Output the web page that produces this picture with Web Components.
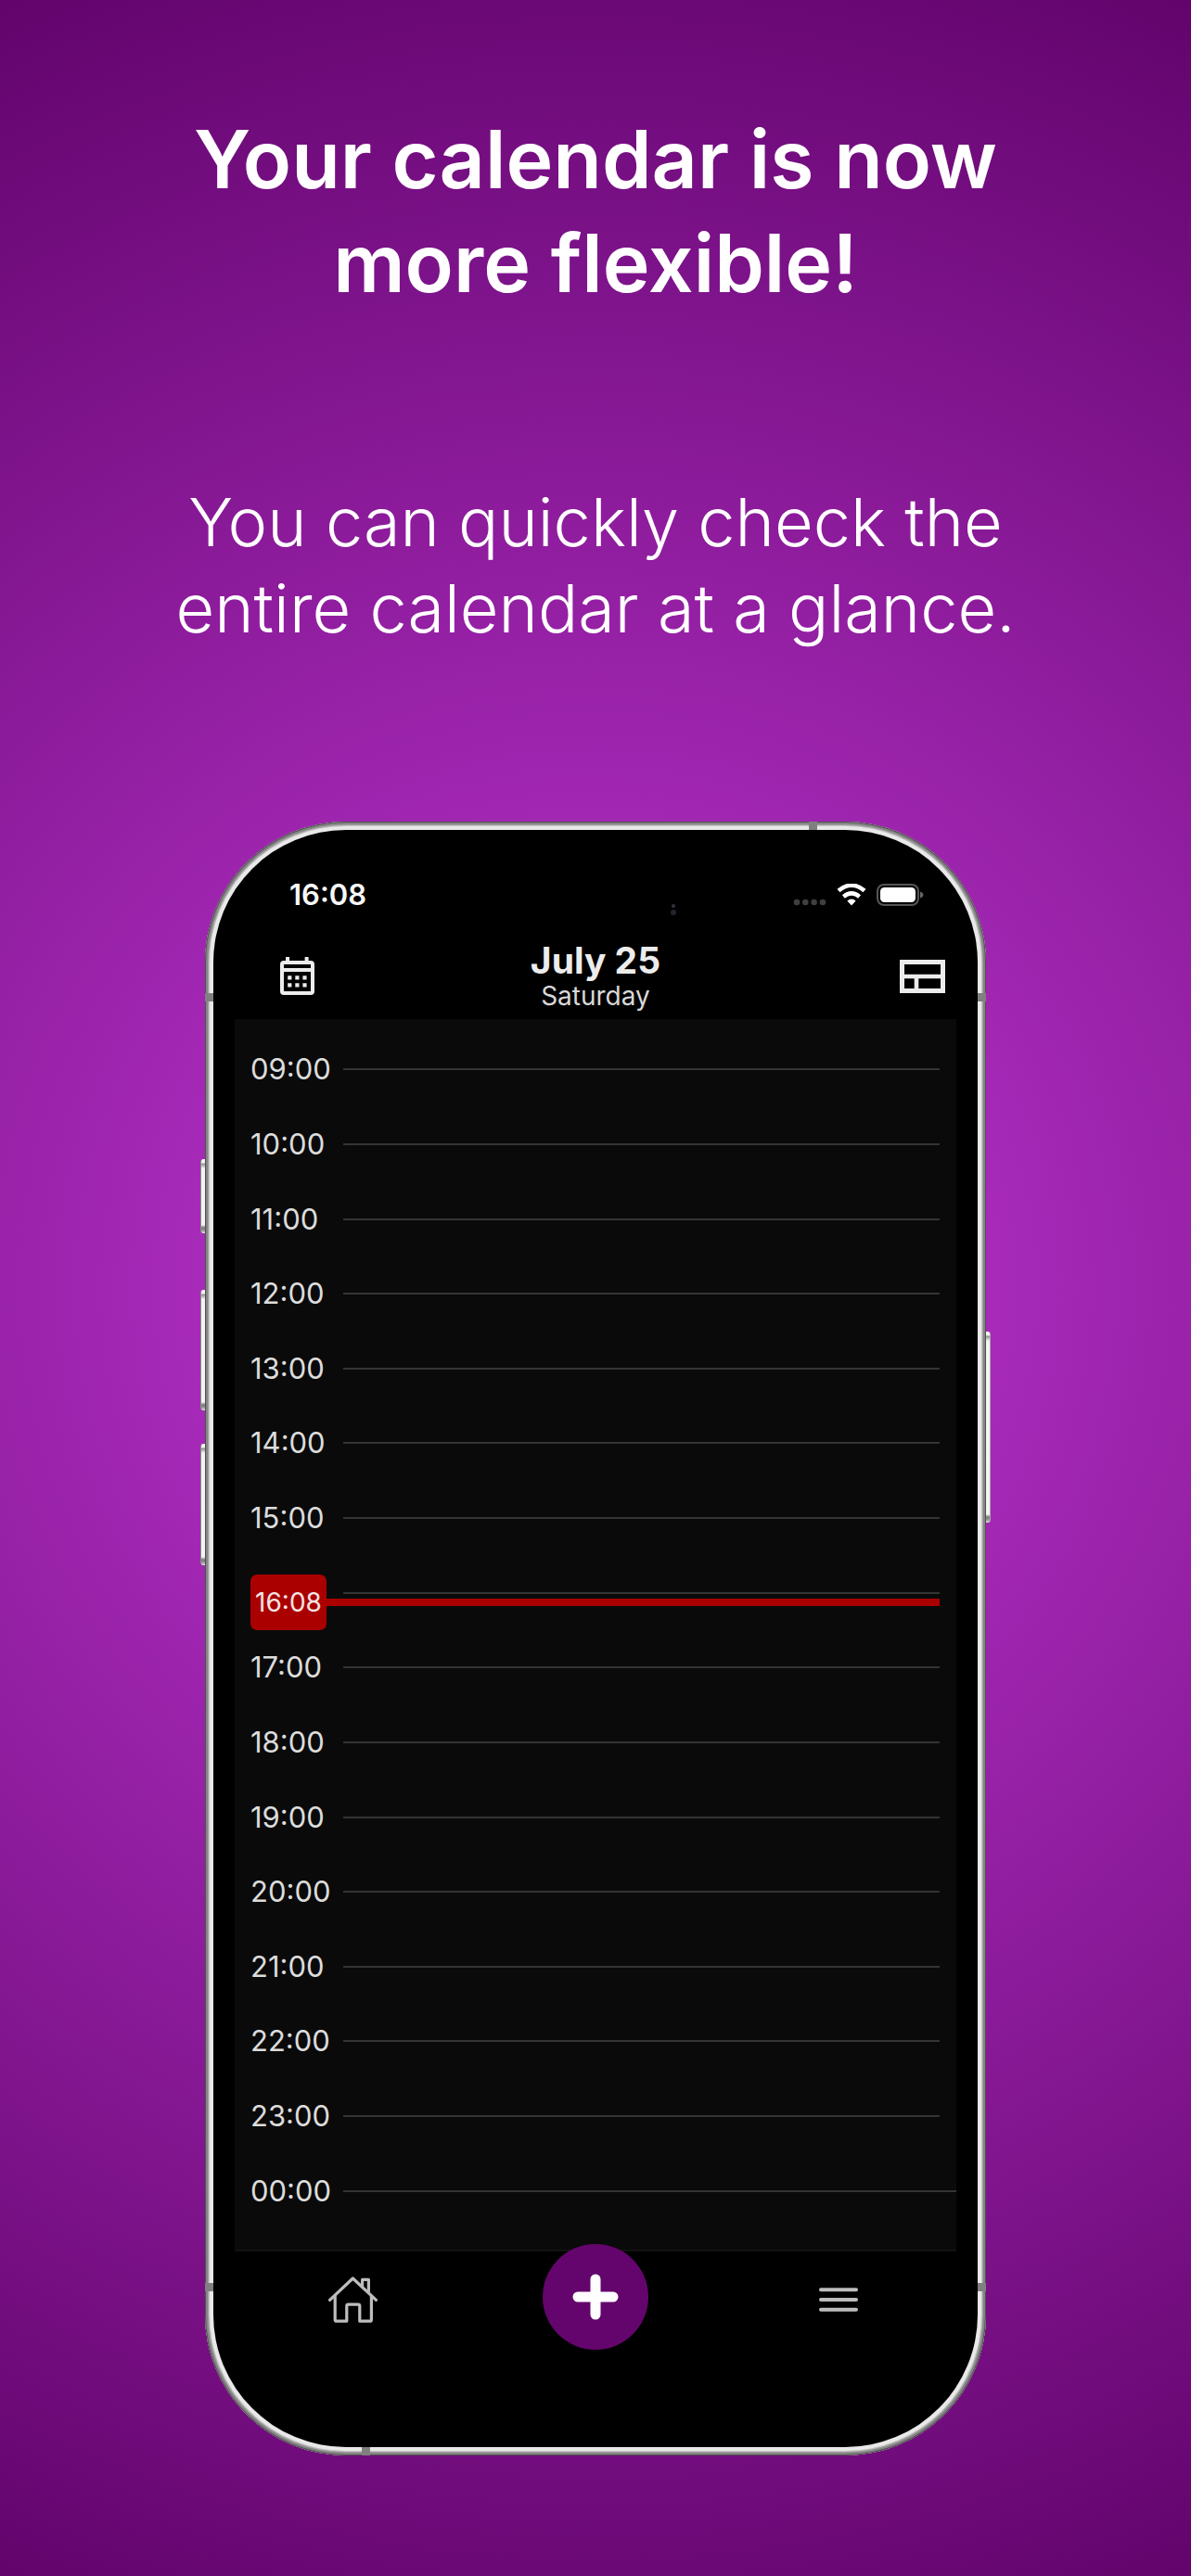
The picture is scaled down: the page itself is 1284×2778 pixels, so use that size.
<!DOCTYPE html>
<html lang="en">
<head>
<meta charset="utf-8">
<meta name="viewport" content="width=device-width, initial-scale=1">
<title>Your calendar is now more flexible!</title>
<style>
  html { min-height: 100%; }
  body {
    margin: 0;
    min-height: 100vh;
    background: radial-gradient(circle farthest-corner at 50% 50%, #c239d7 0%, #62046c 100%) no-repeat;
    font-family: Inter, "Liberation Sans", sans-serif;
    color: #fff;
  }
</style>
</head>
<body>
<promo-page>
  <span slot="title">Your calendar is now<br>more flexible!</span>
  <span slot="text">You can quickly check the<br>entire calendar at a glance.</span>
  <phone-frame>
    <status-bar time="16:08"></status-bar>
    <day-header day="July 25" weekday="Saturday"></day-header>
    <day-timeline from="9" to="24" now="16:08"></day-timeline>
    <tab-bar></tab-bar>
  </phone-frame>
</promo-page>

<script>
class PromoPage extends HTMLElement {
  constructor () {
    super()
    this.attachShadow({ mode: 'open' }).innerHTML = `
      <style>
        :host { display: block; padding: 116px 24px 130px; }
        main { display: flex; flex-direction: column; align-items: center; text-align: center; }
        h1, p { margin: 0; }
        h1 { font-size: 86px; font-weight: 600; line-height: 112px; }
        p { margin-top: 176px; font-size: 72px; font-weight: 300; line-height: 93px; }
        .device { width: 100%; max-width: 842px; margin-top: 184px; text-align: left; }
      </style>
      <main>
        <h1><slot name="title"></slot></h1>
        <p><slot name="text"></slot></p>
        <div class="device"><slot></slot></div>
      </main>
    `
  }
}

class PhoneFrame extends HTMLElement {
  constructor () {
    super()
    this.attachShadow({ mode: 'open' }).innerHTML = `
      <style>
        :host { display: block; position: relative; }
        .body {
          position: relative;
          padding: 9px;
          border-radius: 152px;
          background: #e9e9e9;
          box-shadow:
            inset 0 0 0 1px #505050,
            inset 0 0 0 3px #858585,
            inset 0 0 0 4px #a2a2a2,
            inset 0 0 0 5px #c4c4c4;
        }
        .screen {
          border-radius: 143px;
          padding-bottom: 105px;
          background: #000;
        }
        /* antenna bands */
        .band { position: absolute; width: 9px; height: 9px; background: #808080; }
        .top { top: 0; right: 182px; }
        .bottom { bottom: 0; left: 169px; }
        .left { left: 0; }
        .right { right: 0; }
        .high { top: 185px; }
        .low { bottom: 177px; }
        /* side keys */
        .key {
          position: absolute;
          width: 6px;
          box-sizing: border-box;
          background: linear-gradient(#f2f2f2 4px, #909090 5px, #f4f4f4 10px, #f4f4f4 calc(100% - 9px), #777 calc(100% - 6px), #999 calc(100% - 3px), #e8e8e8 100%);
        }
        .key.l { left: -5px; border-left: 1px solid #8a8a8a; border-radius: 3px 0 0 3px; }
        .key.r { right: -5px; border-right: 1px solid #a5a5a5; border-radius: 0 3px 3px 0; }
        .action { top: 364px; height: 80px; }
        .up { top: 505px; height: 130px; }
        .down { top: 671px; height: 131px; }
        .power { top: 550px; height: 206px; }
      </style>
      <i class="key l action"></i><i class="key l up"></i><i class="key l down"></i>
      <i class="key r power"></i>
      <div class="body">
        <div class="screen"><slot></slot></div>
        <i class="band top"></i><i class="band bottom"></i>
        <i class="band left high"></i><i class="band left low"></i>
        <i class="band right high"></i><i class="band right low"></i>
      </div>
    `
  }
}

class StatusBar extends HTMLElement {
  constructor () {
    super()
    this.attachShadow({ mode: 'open' }).innerHTML = `
      <style>
        :host {
          display: flex;
          align-items: center;
          justify-content: space-between;
          position: relative;
          height: 40px;
          padding: 50px 57px 0 82px;
        }
        time { font-size: 31px; font-weight: 600; line-height: 40px; color: #f8f8f8; }
        .icons { display: flex; align-items: center; gap: 11px; }
        svg { display: block; }
        .camera { position: absolute; left: 492px; top: 78px; }
      </style>
      <time>${this.getAttribute('time')}</time>
      <svg class="camera" width="8" height="16"><circle cx="4" cy="4" r="2" fill="#34343c"/><circle cx="4" cy="11" r="3" fill="#24242e"/></svg>
      <div class="icons">
        <svg width="36" height="24" fill="#3f3f3f">
          <circle cx="4" cy="20" r="3.3"/><circle cx="13.3" cy="20" r="3.3"/><circle cx="22.6" cy="20" r="3.3"/><circle cx="32" cy="20" r="3.3"/>
        </svg>
        <svg width="32" height="24" viewBox="0 0 32 24">
          <path d="M2 7.6 Q16 -4.2 30 7.6" fill="none" stroke="#fff" stroke-width="4.6"/>
          <path d="M7.4 14 Q16 6.8 24.6 14" fill="none" stroke="#fff" stroke-width="4.4"/>
          <path d="M11.4 18.4 Q16 14.8 20.6 18.4 L16 23.6Z" fill="#fff"/>
        </svg>
        <svg width="52" height="24" viewBox="0 0 52 24">
          <rect x="1" y="1" width="44" height="22" rx="7" fill="none" stroke="#555" stroke-width="2"/>
          <rect x="4" y="4" width="38" height="16" rx="4.5" fill="#fff"/>
          <path d="M47 8.4 Q50.4 9.6 50.4 12 Q50.4 14.4 47 15.6Z" fill="#666"/>
        </svg>
      </div>
    `
  }
}

class DayHeader extends HTMLElement {
  constructor () {
    super()
    this.attachShadow({ mode: 'open' }).innerHTML = `
      <style>
        :host {
          display: grid;
          grid-template-columns: 1fr auto 1fr;
          align-items: center;
          margin-top: 27px;
          padding-bottom: 11px;
          color: #ececec;
          text-align: center;
        }
        h2, p { margin: 0; }
        h2 { font-size: 39px; font-weight: 700; line-height: 48px; }
        p { font-size: 28px; line-height: 28px; color: #d8d8d8; }
        button { padding: 5px 0 0; border: 0; background: none; color: inherit; cursor: pointer; }
        .month { justify-self: start; margin-left: 72px; }
        .layout { justify-self: end; margin-right: 35px; }
        svg { display: block; }
      </style>
      <button class="month" aria-label="Month view">
        <svg width="37" height="41" viewBox="0 0 37 41" fill="none" stroke="currentColor">
          <path d="M8 0 V6 M28.6 0 V6" stroke-width="4"/>
          <rect x="2" y="6" width="33" height="33" rx="2" stroke-width="4"/>
          <path d="M2 14 H35" stroke-width="4"/>
          <path d="M8.2 22.3 h4.2 M16.3 22.3 h4.2 M24.4 22.3 h4.2 M8.2 30.4 h4.2 M16.3 30.4 h4.2 M24.4 30.4 h4.2" stroke-width="4.2"/>
        </svg>
      </button>
      <div>
        <h2>${this.getAttribute('day')}</h2>
        <p>${this.getAttribute('weekday')}</p>
      </div>
      <button class="layout" aria-label="Change layout">
        <svg width="49" height="36" viewBox="0 0 49 36" fill="none" stroke="currentColor">
          <rect x="2.5" y="2.5" width="44" height="31" stroke-width="5"/>
          <path d="M2 18 H47 M18 18 V33" stroke-width="4.6"/>
        </svg>
      </button>
    `
  }
}

class DayTimeline extends HTMLElement {
  constructor () {
    super()
    const from = Number(this.getAttribute('from'))
    const to = Number(this.getAttribute('to'))
    const now = this.getAttribute('now')
    const [nowHour, nowMinute] = now.split(':').map(Number)

    let rows = ''
    for (let hour = from; hour <= to; hour++) {
      const label = String(hour % 24).padStart(2, '0') + ':00'
      rows += hour === nowHour
        ? `<li><span class="label"></span><hr><div class="now" style="top: ${Math.floor(50 + nowMinute / 60 * 100)}%"><time>${now}</time></div></li>`
        : `<li><time class="label">${label}</time><hr></li>`
    }

    this.attachShadow({ mode: 'open' }).innerHTML = `
      <style>
        :host {
          display: block;
          margin: 0 23px;
          padding: 14px 0 23px;
          background: #0a0a0a;
          border-bottom: 2px solid #121212;
        }
        ol {
          display: grid;
          grid-auto-rows: 1fr;
          min-height: 1290px;
          margin: 0;
          padding: 0;
          list-style: none;
        }
        li { display: flex; align-items: center; position: relative; padding: 0 18px 0 17px; }
        li:last-child { padding-right: 0; }
        .label { width: 100px; font-size: 31px; line-height: 40px; color: #dcdcdc; }
        hr { flex: 1; height: 2px; margin: 0; border: 0; background: #343434; }
        /* current time, laid over the hour it falls in */
        .now {
          display: flex;
          align-items: center;
          position: absolute;
          left: 17px;
          right: 18px;
          transform: translateY(-50%);
        }
        .now::after { content: ""; flex: 1; height: 8px; background: #a00; }
        .now time {
          width: 82px;
          border-radius: 7px;
          background: #a00;
          color: #f4e4e4;
          font-size: 28px;
          line-height: 60px;
          text-align: center;
        }
      </style>
      <ol>${rows}</ol>
    `
  }
}

class TabBar extends HTMLElement {
  constructor () {
    super()
    this.attachShadow({ mode: 'open' }).innerHTML = `
      <style>
        :host {
          display: grid;
          grid-template-columns: repeat(3, 1fr);
          align-items: center;
          justify-items: center;
          position: relative;
          margin-top: -8px;
          padding: 0 19px;
          color: #bdbdbd;
        }
        button { padding: 0; border: 0; background: none; color: inherit; cursor: pointer; }
        .add {
          display: grid;
          place-items: center;
          width: 114px;
          height: 114px;
          border-radius: 50%;
          background: #64056d;
          color: #fff;
        }
        .side { padding-top: 6px; }
        svg { display: block; }
      </style>
      <button class="side" aria-label="Home">
        <svg width="53" height="50" viewBox="0 0 53 50" fill="none" stroke="currentColor" stroke-width="3.2" stroke-linecap="round" stroke-linejoin="round">
          <path d="M1.6 25.4 L26.4 2 L51.4 25.4"/>
          <path d="M7.2 21 V46.4 Q7.2 48.2 9 48.2 H19.8 V32 Q19.8 30.2 21.6 30.2 H32 Q33.8 30.2 33.8 32 V48.2 H44.6 Q46.4 48.2 46.4 46.4 V21"/>
          <path d="M36.6 10.6 V3.4 H43.4 V17"/>
        </svg>
      </button>
      <button class="add" aria-label="Add event">
        <svg width="50" height="50" viewBox="0 0 50 50" stroke="currentColor" stroke-width="11" stroke-linecap="round">
          <path d="M25 6 V44 M6 25 H44"/>
        </svg>
      </button>
      <button class="side" aria-label="Menu">
        <svg width="42" height="26" viewBox="0 0 42 26" stroke="currentColor" stroke-width="4" stroke-linecap="round">
          <path d="M2 2.3 H40 M2 13 H40 M2 23.7 H40"/>
        </svg>
      </button>
    `
  }
}

customElements.define('promo-page', PromoPage)
customElements.define('phone-frame', PhoneFrame)
customElements.define('status-bar', StatusBar)
customElements.define('day-header', DayHeader)
customElements.define('day-timeline', DayTimeline)
customElements.define('tab-bar', TabBar)
</script>
</body>
</html>
